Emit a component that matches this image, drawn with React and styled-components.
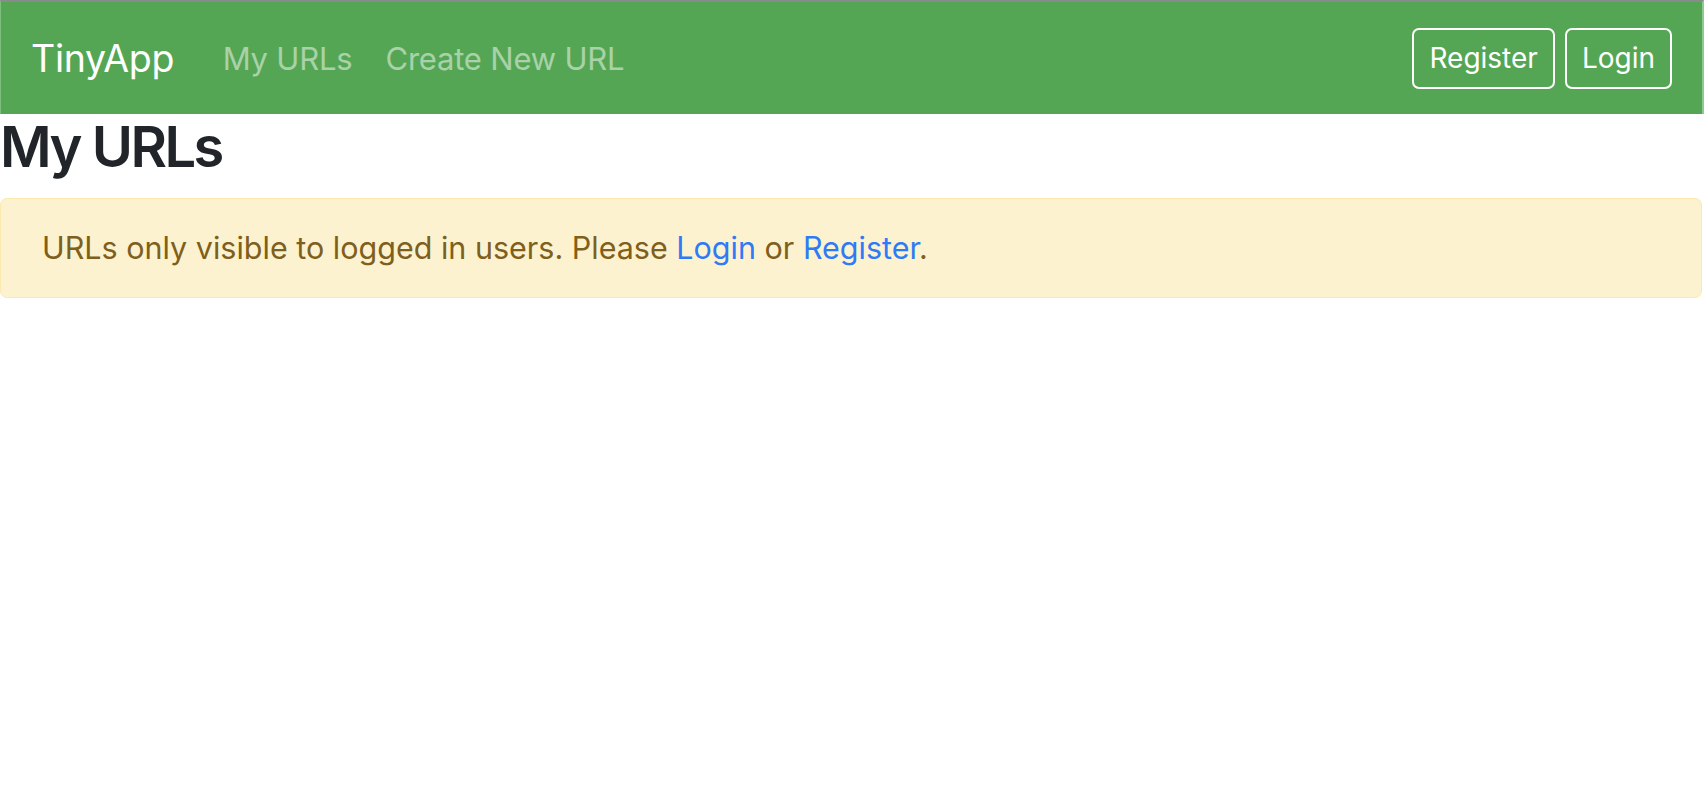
import React from "react";
import styled, { createGlobalStyle } from "styled-components";

const GlobalStyle = createGlobalStyle`
  html, body {
    margin: 0;
    padding: 0;
    background: #ffffff;
  }
  body {
    font-family: Inter, "Noto Sans", "Liberation Sans", sans-serif;
    color: #212529;
  }
  * { box-sizing: border-box; }
`;

const Navbar = styled.nav`
  display: flex;
  align-items: center;
  justify-content: space-between;
  height: 114px;
  padding: 0 30px 0 30px;
  background: #54a654;
  border-top: 2px solid #8a8a8d;
  border-left: 1px solid #7dbd7d;
  border-right: 2px solid #8fc98f;
`;

const NavLeft = styled.div`
  display: flex;
  align-items: center;
`;

const Brand = styled.a`
  font-size: 37.5px;
  color: #ffffff;
  text-decoration: none;
  margin-right: 32px;
  letter-spacing: -0.3px;
`;

const NavLink = styled.a`
  font-size: 31px;
  color: rgba(255, 255, 255, 0.5);
  text-decoration: none;
  padding: 0 16.5px;
  letter-spacing: -0.2px;
`;

const NavRight = styled.div`
  display: flex;
  align-items: center;
  gap: 10px;
`;

const OutlineButton = styled.button`
  height: 61px;
  padding: 0 15px;
  font-family: inherit;
  font-size: 28px;
  color: #ffffff;
  background: transparent;
  border: 2px solid #ffffff;
  border-radius: 7px;
  cursor: pointer;
`;

const Title = styled.h1`
  margin: 0 0 17px 0;
  font-size: 56px;
  font-weight: 600;
  line-height: 1.2;
  color: #212529;
  letter-spacing: -2.5px;
`;

const Alert = styled.div`
  padding: 26px 41px;
  font-size: 30.5px;
  line-height: 1.5;
  color: #7f5f1c;
  background: #fdf2cf;
  border: 1px solid #fbe9b0;
  border-radius: 7px;
  margin-right: 2px;
`;

const AlertLink = styled.a`
  color: #2f7bf5;
  text-decoration: none;
`;

export default function App() {
  return (
    <>
      <GlobalStyle />
      <Navbar>
        <NavLeft>
          <Brand href="#">TinyApp</Brand>
          <NavLink href="#">My URLs</NavLink>
          <NavLink href="#">Create New URL</NavLink>
        </NavLeft>
        <NavRight>
          <OutlineButton>Register</OutlineButton>
          <OutlineButton>Login</OutlineButton>
        </NavRight>
      </Navbar>
      <Title>My URLs</Title>
      <Alert>
        URLs only visible to logged in users. Please{" "}
        <AlertLink href="#">Login</AlertLink> or{" "}
        <AlertLink href="#">Register</AlertLink>.
      </Alert>
    </>
  );
}
